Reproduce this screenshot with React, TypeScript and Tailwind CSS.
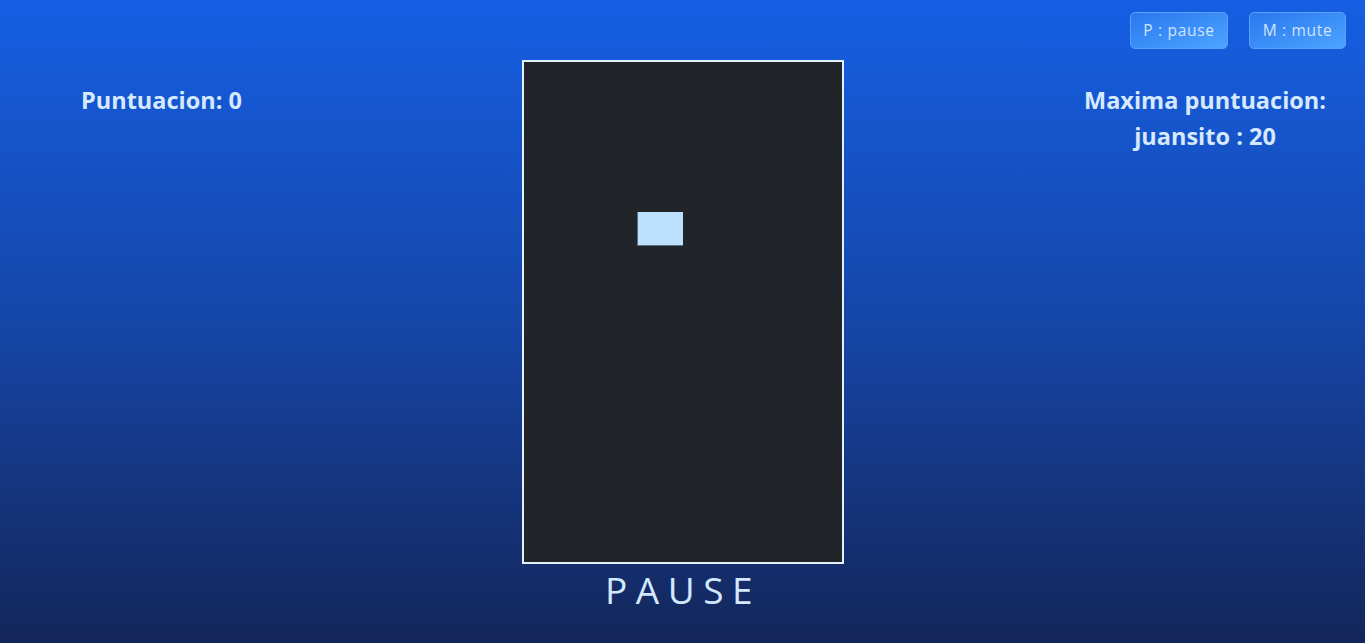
import React from "react";

export default function App() {
  const font = { fontFamily: '"Open Sans", "Noto Sans", "Liberation Sans", sans-serif' };
  return (
    <div
      className="w-[1365px] h-[643px] overflow-hidden bg-gradient-to-b from-[#155fe4] via-[#1546a8] to-[#13265a] text-[#d6e9ff]"
      style={font}
    >
      <div className="flex justify-end gap-[21px] pt-3 pr-[19px]">
        <button className="w-[98px] h-[37px] rounded-[5px] border border-[#5aa2ff] bg-gradient-to-br from-[#2a77ee] to-[#4ea4ff] text-[15.5px] tracking-[0.7px] text-[#cfe4ff]">
          P : pause
        </button>
        <button className="w-[97px] h-[37px] rounded-[5px] border border-[#5aa2ff] bg-gradient-to-br from-[#2a77ee] to-[#4ea4ff] text-[15.5px] tracking-[0.7px] text-[#cfe4ff]">
          M : mute
        </button>
      </div>
      <div className="flex mt-[11px]">
        <div className="w-[522px] pl-[81px] pt-[24px]">
          <div className="text-[23.5px] font-bold leading-[32px]">Puntuacion: 0</div>
        </div>
        <div className="flex flex-col items-center w-[322px]">
          <div className="w-[322px] h-[504px] border-2 border-[#e2f0ff] bg-[#212429] relative">
            <div className="absolute left-[113px] top-[150px] w-[46px] h-[34px] bg-[#bde0ff] border-l border-b border-[#5c6f84]" />
          </div>
          <div className="mt-[3px] text-[37px] leading-[46px] tracking-[8.5px] font-normal text-[#d2e8ff]">
            PAUSE
          </div>
        </div>
        <div className="flex-1 pt-[24px] pr-[32px] flex justify-end">
          <div className="text-center text-[23.5px] font-bold w-[256px] whitespace-nowrap">
            <div className="leading-[32px]">Maxima puntuacion:</div>
            <div className="mt-[4px] leading-[32px]">juansito : 20</div>
          </div>
        </div>
      </div>
    </div>
  );
}
